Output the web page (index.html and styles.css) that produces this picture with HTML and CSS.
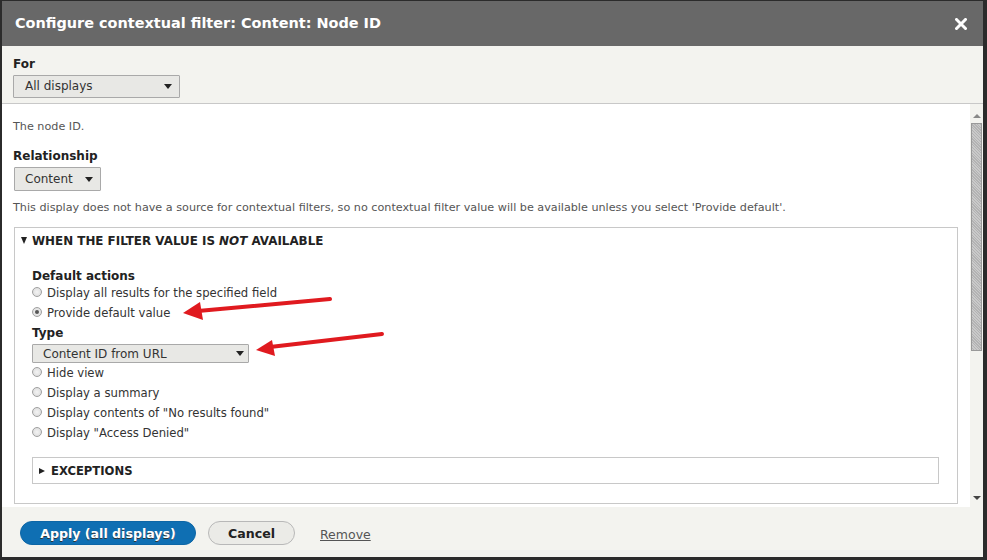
FILE: index.html
```html
<!DOCTYPE html>
<html>
<head>
<meta charset="utf-8">
<link rel="stylesheet" href="styles.css">
</head>
<body>
<div class="dialog">
  <div class="titlebar">
    <span class="title">Configure contextual filter: Content: Node ID</span>
    <svg class="close" width="12" height="12" viewBox="0 0 12 12"><path d="M1.5 1.5 L10.5 10.5 M10.5 1.5 L1.5 10.5" stroke="#fff" stroke-width="3" stroke-linecap="square"/></svg>
  </div>
  <div class="override">
    <div class="label">For</div>
    <div class="select sel-for"><span>All displays</span><i class="caret"></i></div>
  </div>
  <div class="body">
    <div class="scroll">
      <div class="desc first">The node ID.</div>
      <div class="label rel">Relationship</div>
      <div class="select sel-rel"><span>Content</span><i class="caret"></i></div>
      <div class="desc note">This display does not have a source for contextual filters, so no contextual filter value will be available unless you select 'Provide default'.</div>
      <div class="fieldset">
        <div class="legend"><i class="tri-down"></i>WHEN THE FILTER VALUE IS <em>NOT</em> AVAILABLE</div>
        <div class="fs-body">
          <div class="label">Default actions</div>
          <div class="radio"><i class="dot"></i>Display all results for the specified field</div>
          <div class="radio"><i class="dot on"></i>Provide default value</div>
          <div class="label type">Type</div>
          <div class="select sel-type"><span>Content ID from URL</span><i class="caret"></i></div>
          <div class="radio"><i class="dot"></i>Hide view</div>
          <div class="radio"><i class="dot"></i>Display a summary</div>
          <div class="radio"><i class="dot"></i>Display contents of "No results found"</div>
          <div class="radio"><i class="dot"></i>Display "Access Denied"</div>
          <div class="subfs"><i class="tri-right"></i>EXCEPTIONS</div>
        </div>
      </div>
    </div>
    <div class="scrollbar">
      <i class="sb-up"></i>
      <div class="sb-thumb"></div>
      <div class="sb-space"></div>
      <i class="sb-down"></i>
    </div>
  </div>
  <div class="footer">
    <span class="btn primary">Apply (all displays)</span>
    <span class="btn">Cancel</span>
    <span class="remove">Remove</span>
  </div>
  <svg class="arrows" width="987" height="560" viewBox="0 0 987 560">
    <path d="M330 299 L198 311" stroke="#e01a1f" stroke-width="4" stroke-linecap="round"/>
    <path d="M183 313 L200 302 L203 320 Z" fill="#e01a1f"/>
    <path d="M382 334 L270 347" stroke="#e01a1f" stroke-width="4" stroke-linecap="round"/>
    <path d="M256 350 L272 340 L275 356 Z" fill="#e01a1f"/>
  </svg>
</div>
</body>
</html>
```
FILE: styles.css
```css
html, body { margin: 0; padding: 0; }
body {
  background: #2b2b2b;
  width: 987px;
  height: 560px;
  overflow: hidden;
  font-family: "DejaVu Sans", sans-serif;
  color: #222;
}
.dialog {
  position: relative;
  margin: 1px 4px 0 2px;
  height: 556px;
  display: flex;
  flex-direction: column;
  background: #f3f3ef;
}
.titlebar {
  height: 45px;
  background: #686868;
  display: flex;
  align-items: center;
  justify-content: space-between;
  padding: 0 16px 0 13px;
  flex: none;
}
.title {
  color: #fff;
  font-weight: bold;
  font-size: 14.45px;
  margin-top: -1px;
}
.close { display: block; }
.override {
  flex: none;
  height: 58px;
  box-sizing: border-box;
  padding: 11px 11px 0;
  border-bottom: 1px solid #c8c8c8;
  background: #f3f3ef;
}
.label {
  font-weight: bold;
  font-size: 12px;
  line-height: 15px;
  color: #222;
}
.select {
  box-sizing: border-box;
  display: flex;
  align-items: center;
  justify-content: space-between;
  border: 1px solid #a9a9a9;
  background: #e8e8e5;
  border-radius: 1px;
  color: #333;
  font-size: 12px;
}
.caret {
  width: 0; height: 0;
  border-left: 4px solid transparent;
  border-right: 4px solid transparent;
  border-top: 5px solid #222;
}
.sel-for { width: 167px; height: 23px; margin-top: 3px; padding: 0 7px 0 11px; }
.sel-for span { margin-top: -1px; }
.body {
  flex: none;
  height: 403px;
  display: flex;
  background: #fff;
}
.scroll {
  flex: 1;
  padding: 0 11px 0 11px;
  overflow: hidden;
}
.desc { font-size: 11.2px; color: #555; line-height: 13px; }
.desc.first { margin-top: 16px; }
.rel { margin-top: 16px; }
.sel-rel { width: 87px; height: 24px; margin-top: 3px; margin-left: 1px; padding: 0 7px 0 10px; }
.note { margin-top: 10px; }
.fieldset {
  margin-top: 13px;
  margin-left: 1px;
  width: 944px;
  height: 277px;
  box-sizing: border-box;
  border: 1px solid #c8c8c8;
}
.legend {
  font-weight: bold;
  font-size: 11.9px;
  padding: 6px 0 0 6px;
  line-height: 14px;
  color: #222;
}
.legend em { font-style: italic; }
.tri-down {
  display: inline-block;
  vertical-align: 1px;
  width: 0; height: 0;
  border-left: 3.5px solid transparent;
  border-right: 3.5px solid transparent;
  border-top: 7px solid #222;
  margin-right: 5px;
}
.fs-body { padding: 21px 18px 0 17px; }
.fs-body > .label { line-height: 14px; }
.radio {
  display: flex;
  align-items: center;
  font-size: 11.65px;
  line-height: 20px;
  height: 20px;
  color: #333;
}
.fs-body > .label + .radio { margin-top: 0; }
.dot {
  width: 8px; height: 8px;
  border-radius: 50%;
  border: 1px solid #a0a0a0;
  background: radial-gradient(circle, #f4f4f4 0, #d8d8d8 100%);
  margin: -3px 5px 0 0;
  position: relative;
  flex: none;
}
.dot.on::after {
  content: "";
  position: absolute;
  left: 2px; top: 2px;
  width: 4px; height: 4px;
  border-radius: 50%;
  background: #555;
}
.fs-body > .label.type { margin-top: 3px; line-height: 14px; }
.sel-type { width: 217px; height: 19px; margin-top: 4px; padding: 0 4px 0 10px; }
.subfs {
  margin-top: 14px;
  width: 907px;
  height: 27px;
  box-sizing: border-box;
  border: 1px solid #c8c8c8;
  font-weight: bold;
  font-size: 11.6px;
  display: flex;
  align-items: center;
  padding-left: 6px;
  color: #222;
}
.tri-right {
  width: 0; height: 0;
  border-top: 3.5px solid transparent;
  border-bottom: 3.5px solid transparent;
  border-left: 6px solid #222;
  margin-right: 6px;
}
.scrollbar {
  width: 13px;
  background: #f3f3ef;
  display: flex;
  flex-direction: column;
  align-items: center;
  flex: none;
}
.sb-up {
  margin-top: 10px;
  width: 0; height: 0;
  border-left: 4px solid transparent;
  border-right: 4px solid transparent;
  border-bottom: 4px solid #888;
}
.sb-thumb {
  margin-top: 5px;
  width: 11px;
  height: 228px;
  box-sizing: border-box;
  border: 1px solid #999;
  background: repeating-linear-gradient(45deg, #c9c9c9 0 1px, #b3b3b3 1px 2px);
}
.sb-space { flex: 1; }
.sb-down {
  margin-bottom: 7px;
  width: 0; height: 0;
  border-left: 4px solid transparent;
  border-right: 4px solid transparent;
  border-top: 4px solid #444;
}
.footer {
  flex: 1;
  display: flex;
  align-items: flex-start;
  padding: 14px 0 0 18px;
  background: #f3f3ef;
}
.btn {
  box-sizing: border-box;
  height: 24px;
  display: flex;
  align-items: center;
  justify-content: center;
  border-radius: 12px;
  font-weight: bold;
  font-size: 12.6px;
  border: 1px solid #b8b8b8;
  background: #ebebe7;
  color: #222;
  width: 87px;
  margin-right: 13px;
}
.btn.primary {
  width: 176px;
  background: #0f6fb3;
  border-color: #0d66a6;
  color: #fff;
  text-shadow: 0 1px 0 #333;
  margin-right: 12px;
}
.remove {
  margin-left: 12px;
  margin-top: 6px;
  font-size: 12.5px;
  color: #555;
  text-decoration: underline;
}
.arrows { position: absolute; left: -2px; top: -1px; pointer-events: none; }
```
